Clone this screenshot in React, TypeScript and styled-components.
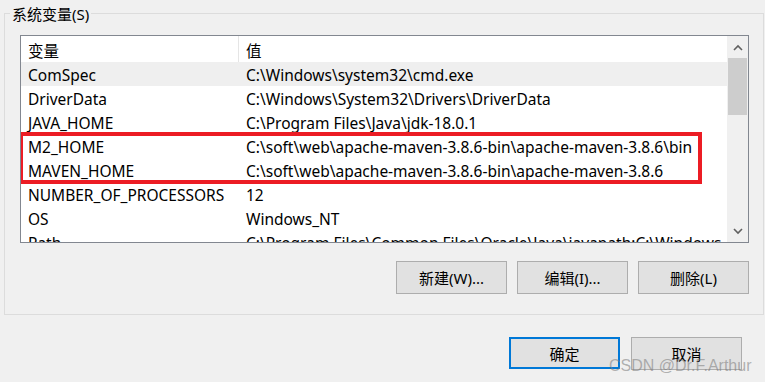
import React from 'react';
import styled, { createGlobalStyle } from 'styled-components';

const GlobalStyle = createGlobalStyle`
  html, body {
    margin: 0;
    padding: 0;
    background: #f0f0f0;
  }
  body {
    font-family: "Noto Sans", "Noto Sans CJK SC", sans-serif;
    color: #000;
  }
`;

interface EnvVar {
  name: string;
  value: string;
}

const vars: EnvVar[] = [
  { name: 'ComSpec', value: 'C:\\Windows\\system32\\cmd.exe' },
  { name: 'DriverData', value: 'C:\\Windows\\System32\\Drivers\\DriverData' },
  { name: 'JAVA_HOME', value: 'C:\\Program Files\\Java\\jdk-18.0.1' },
  { name: 'M2_HOME', value: 'C:\\soft\\web\\apache-maven-3.8.6-bin\\apache-maven-3.8.6\\bin' },
  { name: 'MAVEN_HOME', value: 'C:\\soft\\web\\apache-maven-3.8.6-bin\\apache-maven-3.8.6' },
  { name: 'NUMBER_OF_PROCESSORS', value: '12' },
  { name: 'OS', value: 'Windows_NT' },
  { name: 'Path', value: 'C:\\Program Files\\Common Files\\Oracle\\Java\\javapath;C:\\Windows' },
];

const App: React.FC = () => {
  return (
    <>
      <GlobalStyle />
      <Window>
        <GroupBox>
          <Legend>系统变量(S)</Legend>
          <ListBox>
            <ListContent>
              <HeaderRow>
                <HeaderCell>变量</HeaderCell>
                <HeaderCell divider>值</HeaderCell>
              </HeaderRow>
              {vars.map((v, i) => (
                <Row key={v.name} selected={i === 0}>
                  <NameCell>{v.name}</NameCell>
                  <ValueCell>{v.value}</ValueCell>
                </Row>
              ))}
              <Highlight />
            </ListContent>
            <ScrollBar>
              <Arrow>
                <svg width="10" height="7" viewBox="0 0 10 7">
                  <path d="M1 6 L5 2 L9 6" fill="none" stroke="#606060" strokeWidth="1.6" />
                </svg>
              </Arrow>
              <Thumb />
              <Track />
              <Arrow>
                <svg width="10" height="7" viewBox="0 0 10 7">
                  <path d="M1 1 L5 5 L9 1" fill="none" stroke="#606060" strokeWidth="1.6" />
                </svg>
              </Arrow>
            </ScrollBar>
          </ListBox>
          <ButtonRow>
            <Button>新建(W)...</Button>
            <Button>编辑(I)...</Button>
            <Button>删除(L)</Button>
          </ButtonRow>
        </GroupBox>
        <FooterRow>
          <Button primary>确定</Button>
          <Button>取消</Button>
        </FooterRow>
        <Watermark>CSDN @Dr.F.Arthur</Watermark>
      </Window>
    </>
  );
};

const Window = styled.div`
  position: relative;
  width: 765px;
  height: 382px;
  overflow: hidden;
  padding-top: 13px;
  box-sizing: border-box;
`;

const GroupBox = styled.div`
  margin-left: 4px;
  width: 760px;
  height: 302px;
  box-sizing: border-box;
  border: 1px solid #dcdcdc;
  padding: 0 0 0 15px;
  display: flex;
  flex-direction: column;
`;

const Legend = styled.div`
  align-self: flex-start;
  margin: -10px 0 0 -10px;
  padding: 0 2px;
  height: 20px;
  line-height: 20px;
  background: #f0f0f0;
  font-size: 15px;
`;

const ListBox = styled.div`
  margin-top: 11px;
  width: 729px;
  height: 208px;
  box-sizing: border-box;
  border: 1px solid #828790;
  background: #fff;
  display: flex;
`;

const ListContent = styled.div`
  position: relative;
  flex: 1;
  overflow: hidden;
  font-size: 15.5px;
`;

const HeaderRow = styled.div`
  display: flex;
  height: 26px;
  align-items: center;
`;

const HeaderCell = styled.div<{ divider?: boolean }>`
  height: 100%;
  display: flex;
  align-items: center;
  box-sizing: border-box;
  width: ${p => (p.divider ? 'auto' : '217px')};
  flex: ${p => (p.divider ? '1' : 'none')};
  padding: 2px 0 0 7px;
  border-left: ${p => (p.divider ? '1px solid #e5e5e5' : 'none')};
`;

const Row = styled.div<{ selected?: boolean }>`
  display: flex;
  height: 24px;
  box-sizing: border-box;
  padding-top: 2px;
  align-items: center;
  background: ${p => (p.selected ? '#efefef' : '#fff')};
  white-space: nowrap;
`;

const NameCell = styled.div`
  width: 217px;
  flex: none;
  padding-left: 7px;
  box-sizing: border-box;
`;

const ValueCell = styled.div`
  flex: 1;
  padding-left: 8px;
  overflow: hidden;
`;

const Highlight = styled.div`
  position: absolute;
  left: -2px;
  top: 96px;
  width: 683px;
  height: 52px;
  box-sizing: border-box;
  border: 4px solid #ec1c24;
  pointer-events: none;
`;

const ScrollBar = styled.div`
  width: 21px;
  flex: none;
  background: #f0f0f0;
  display: flex;
  flex-direction: column;
  align-items: center;
`;

const Arrow = styled.div`
  height: 22px;
  width: 100%;
  display: flex;
  align-items: center;
  justify-content: center;
`;

const Thumb = styled.div`
  width: 19px;
  height: 57px;
  background: #cdcdcd;
`;

const Track = styled.div`
  flex: 1;
`;

const ButtonRow = styled.div`
  display: flex;
  gap: 10px;
  justify-content: flex-end;
  width: 729px;
  margin-top: 18px;
`;

const Button = styled.button<{ primary?: boolean }>`
  width: 111px;
  height: ${p => (p.primary ? '32px' : '33px')};
  box-sizing: border-box;
  background: #e1e1e1;
  border: ${p => (p.primary ? '2px solid #0078d7' : '1px solid #adadad')};
  font-family: "Noto Sans", "Noto Sans CJK SC", sans-serif;
  font-size: 15px;
  color: #000;
  padding: 0;
  cursor: pointer;
`;

const FooterRow = styled.div`
  display: flex;
  gap: 11px;
  margin: 22px 0 0 509px;
  align-items: flex-start;
`;

const Watermark = styled.div`
  position: absolute;
  left: 609px;
  top: 357px;
  font-family: "Liberation Sans", Arial, sans-serif;
  font-size: 16px;
  color: rgba(120, 120, 120, 0.55);
  pointer-events: none;
`;

export default App;
